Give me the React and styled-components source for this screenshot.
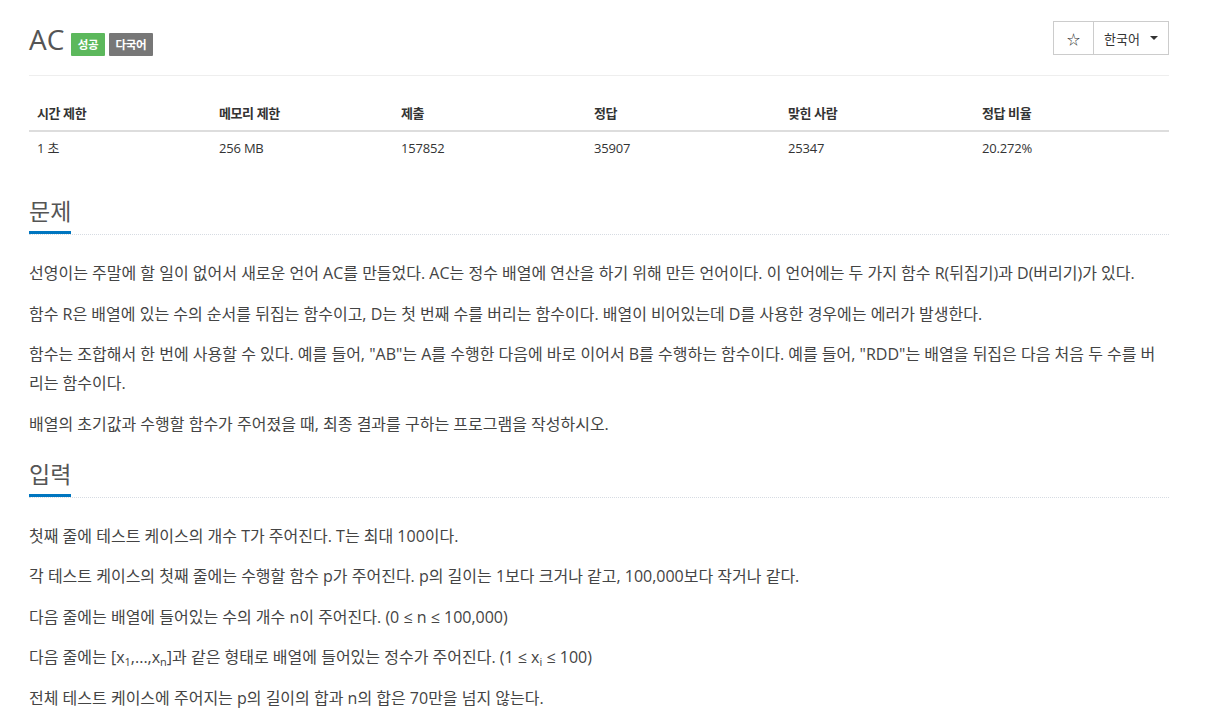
import styled, { createGlobalStyle } from 'styled-components';

const GlobalStyle = createGlobalStyle`
  body {
    margin: 0;
    background: #fff;
    font-family: "Open Sans", "Noto Sans CJK KR", sans-serif;
    color: #333;
  }
`;

const Page = styled.div`
  width: 1140px;
  margin: 0 29px;
  padding-top: 17px;
`;

const Header = styled.div`
  display: flex;
  justify-content: space-between;
  align-items: flex-start;
  border-bottom: 1px solid #eee;
  height: 58px;
`;

const TitleRow = styled.div`
  display: flex;
  align-items: baseline;
  gap: 4px;
`;

const Title = styled.h1`
  margin: 0 3px 0 0;
  font-size: 28px;
  font-weight: 400;
  line-height: 44px;
  color: #555;
`;

const Label = styled.span`
  display: inline-block;
  background: ${(p) => p.$bg};
  color: #fff;
  font-size: 11.5px;
  font-weight: 700;
  line-height: 23px;
  padding: 0 6.5px;
  border-radius: 1px;
  letter-spacing: -0.3px;
  position: relative;
  top: -1px;
`;

const BtnGroup = styled.div`
  display: flex;
  margin-top: 4px;
`;

const Btn = styled.button`
  height: 34px;
  border: 1px solid #ccc;
  background: #fff;
  color: #333;
  font-family: inherit;
  font-size: 13px;
  padding: 0 ${(p) => p.$pad}px;
  display: flex;
  align-items: center;
  gap: 10px;
  cursor: pointer;
  & + & {
    border-left: none;
  }
`;

const Caret = styled.span`
  width: 0;
  height: 0;
  border-left: 4px solid transparent;
  border-right: 4px solid transparent;
  border-top: 4px solid #333;
`;

const Table = styled.table`
  width: 100%;
  border-collapse: collapse;
  margin-top: 19px;
  margin-bottom: 30px;
  font-size: 13px;
`;

const Th = styled.th`
  text-align: left;
  font-weight: 700;
  padding: 8px 8px 7px;
  line-height: 20px;
  border-bottom: 2px solid #ddd;
  letter-spacing: -0.4px;
`;

const Td = styled.td`
  padding: 6px 8px 8px;
  line-height: 20px;
  letter-spacing: -0.2px;
`;

const Section = styled.section`
  & + & {
    margin-top: 20px;
  }
`;

const Headline = styled.div`
  border-bottom: 1px dotted #d6dbe2;
  margin-bottom: 24px;
  height: 38px;
`;

const HeadTitle = styled.h2`
  display: inline-block;
  margin: 0;
  font-size: 23px;
  font-weight: 400;
  line-height: 30px;
  padding-bottom: 5px;
  color: #555;
  border-bottom: 3px solid #0076c0;
`;

const Para = styled.p`
  margin: 0 0 11.5px;
  font-size: 16px;
  line-height: 29px;
  color: #444;
  word-break: break-all;

  sub {
    font-size: 11px;
    line-height: 0;
    vertical-align: -3px;
  }
`;

const stats = [
  ['시간 제한', '1 초', 182],
  ['메모리 제한', '256 MB', 182],
  ['제출', '157852', 193],
  ['정답', '35907', 194],
  ['맞힌 사람', '25347', 194],
  ['정답 비율', '20.272%', 195],
];

const description = [
  '선영이는 주말에 할 일이 없어서 새로운 언어 AC를 만들었다. AC는 정수 배열에 연산을 하기 위해 만든 언어이다. 이 언어에는 두 가지 함수 R(뒤집기)과 D(버리기)가 있다.',
  '함수 R은 배열에 있는 수의 순서를 뒤집는 함수이고, D는 첫 번째 수를 버리는 함수이다. 배열이 비어있는데 D를 사용한 경우에는 에러가 발생한다.',
  '함수는 조합해서 한 번에 사용할 수 있다. 예를 들어, "AB"는 A를 수행한 다음에 바로 이어서 B를 수행하는 함수이다. 예를 들어, "RDD"는 배열을 뒤집은 다음 처음 두 수를 버리는 함수이다.',
  '배열의 초기값과 수행할 함수가 주어졌을 때, 최종 결과를 구하는 프로그램을 작성하시오.',
];

const App = () => {
  return (
    <Page>
      <GlobalStyle />
      <Header>
        <TitleRow>
          <Title>AC</Title>
          <Label $bg="#5cb85c">성공</Label>
          <Label $bg="#777">다국어</Label>
        </TitleRow>
        <BtnGroup>
          <Btn $pad={13}>☆</Btn>
          <Btn $pad={10}>
            한국어 <Caret />
          </Btn>
        </BtnGroup>
      </Header>

      <Table>
        <colgroup>
          {stats.map(([name, , w]) => (
            <col key={name} style={{ width: w }} />
          ))}
        </colgroup>
        <thead>
          <tr>
            {stats.map(([name]) => (
              <Th key={name}>{name}</Th>
            ))}
          </tr>
        </thead>
        <tbody>
          <tr>
            {stats.map(([name, value]) => (
              <Td key={name}>{value}</Td>
            ))}
          </tr>
        </tbody>
      </Table>

      <Section>
        <Headline>
          <HeadTitle>문제</HeadTitle>
        </Headline>
        {description.map((text) => (
          <Para key={text}>{text}</Para>
        ))}
      </Section>

      <Section>
        <Headline>
          <HeadTitle>입력</HeadTitle>
        </Headline>
        <Para>첫째 줄에 테스트 케이스의 개수 T가 주어진다. T는 최대 100이다.</Para>
        <Para>
          각 테스트 케이스의 첫째 줄에는 수행할 함수 p가 주어진다. p의 길이는 1보다 크거나 같고, 100,000보다 작거나 같다.
        </Para>
        <Para>다음 줄에는 배열에 들어있는 수의 개수 n이 주어진다. (0 ≤ n ≤ 100,000)</Para>
        <Para>
          다음 줄에는 [x<sub>1</sub>,...,x<sub>n</sub>]과 같은 형태로 배열에 들어있는 정수가 주어진다. (1 ≤ x<sub>i</sub> ≤ 100)
        </Para>
        <Para>전체 테스트 케이스에 주어지는 p의 길이의 합과 n의 합은 70만을 넘지 않는다.</Para>
      </Section>
    </Page>
  );
};

export default App;
